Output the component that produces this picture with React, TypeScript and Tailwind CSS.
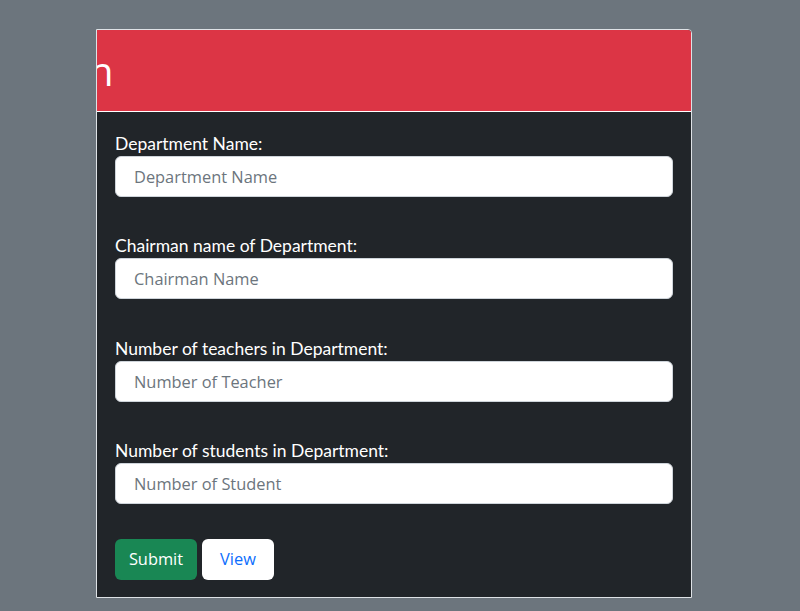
const fields = [
  { label: "Department Name:", placeholder: "Department Name" },
  { label: "Chairman name of Department:", placeholder: "Chairman Name" },
  { label: "Number of teachers in Department:", placeholder: "Number of Teacher" },
  { label: "Number of students in Department:", placeholder: "Number of Student" },
];

export default function App() {
  return (
    <div className="min-h-[611px] bg-[#6c757d] pt-[29px] font-['Open_Sans',sans-serif]">
      <div className="ml-[96px] w-[596px] overflow-hidden rounded-tr-[4px] border border-[#dee2e6] bg-[#212529]">
        <div className="flex h-[82px] items-center overflow-hidden border-b border-white bg-[#dc3545]">
          <h1 className="-ml-[8px] whitespace-nowrap text-[40px] leading-none text-white">n</h1>
        </div>
        <form className="px-[18px] pt-[20px] pb-[17px]" onSubmit={(e) => e.preventDefault()}>
          {fields.map((f, i) => (
            <div key={f.label} className={i === fields.length - 1 ? "mb-[35px]" : "mb-[37.4px]"}>
              <label className="block font-['Lato',sans-serif] text-[17.5px] leading-[24px] text-white">
                {f.label}
              </label>
              <input
                placeholder={f.placeholder}
                className="h-[41px] w-full rounded-[6px] border border-[#ced4da] bg-white px-[18px] text-[16.4px] text-[#212529] outline-none placeholder:text-[#6c757d]"
              />
            </div>
          ))}
          <div className="flex gap-[5px]">
            <button className="h-[41px] w-[82px] rounded-[6px] bg-[#198754] text-[16.4px] text-white">
              Submit
            </button>
            <button className="h-[41px] w-[72px] rounded-[6px] bg-white text-[16.4px] text-[#0d6efd]">
              View
            </button>
          </div>
        </form>
      </div>
    </div>
  );
}
